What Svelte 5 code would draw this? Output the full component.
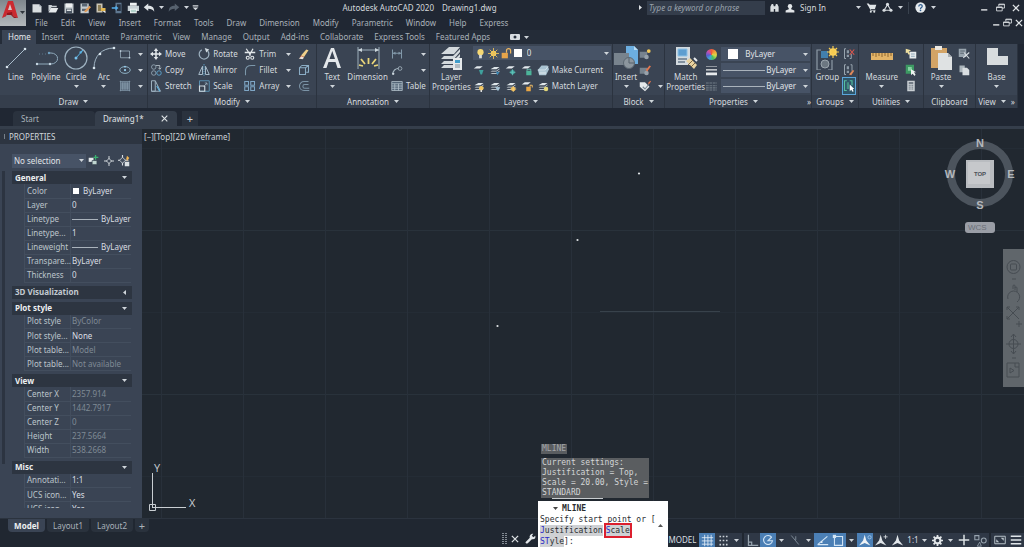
<script>
  const stack = '<path d="M2 7l5-3h7l-4 3zM2 10l2-1 6 0 4-3v1l-4 3zM2 13l2-1h6l4-3v1l-4 3z" fill="#dfe6ea"/>';
  const sheet = '<path d="M1 6l4-3h8l-4 3z" fill="#e4eaee"/>';

  const icons = {
    new: '<path d="M2 3h9l3 3v8H2z" fill="#d8dde0"/><path d="M11 3v3h3" fill="#9aa5ad"/>',
    open: '<path d="M2 13V4h4l1 1h6v2H6z" fill="#c9d0d4"/><path d="M5 8h10l-3 6H2z" fill="#e6eaec"/>',
    save: '<path d="M2 2h12v13H2z" fill="#c3cace"/><path d="M4 2h8v5H4z" fill="#eef1f2"/><path d="M4 9h8v6H4z" fill="#4b5663"/><path d="M5 10h6v2H5z" fill="#dde2e4"/>',
    saveas: '<path d="M2 2h11v13H2z" fill="#c3cace"/><path d="M4 2h7v4H4zM4 9h7v3H4z" fill="#596572"/><path d="M8 11l6-6 2 2-6 6-3 1z" fill="#e09a56"/>',
    web: '<path d="M2 2h8v12H2z" fill="#c9c4b4"/><path d="M4 4h4v8H4z" fill="#8a7b54"/><path d="M8 8h6v4H8z" fill="#e2b74f"/><path d="M10 12l4 3v-3z" fill="#eee"/>',
    mobile: '<path d="M6 1h8v14H6z" fill="#5f7891"/><path d="M8 3h5v9H8z" fill="#27313f"/><path d="M1 7h5V5l4 3-4 3V9H1z" fill="#55aeea"/>',
    print: '<path d="M4 1h9v4H4z" fill="#eef1f2"/><path d="M1 5h15v7H1z" fill="#c9d2d6"/><path d="M4 9h9v6H4z" fill="#f4f6f7"/><path d="M5 11h7M5 13h7" stroke="#7fb6a7"/>',
    undo: '<path d="M1 7l6-5v3c5 0 8 2 8 8-2-3-4-4-8-4v3z" fill="#dfe4e7"/>',
    redo: '<path d="M15 7L9 2v3c-5 0-8 2-8 8 2-3 4-4 8-4v3z" fill="#56616e"/>',
    qat: '<path d="M3 4h10v2H3zM3 8h10l-5 5z" fill="#d5dade"/>',
    find: '<path d="M2 14V7l2-4h2l1 3h2l1-3h2l2 4v7h-5v-4H7v4z" fill="#d8dde0"/>',
    user: '<circle cx="8" cy="5" r="3.5" fill="#e2e6e9"/><path d="M6 7h4v3l5 2v3H1v-3l5-2z" fill="#e2e6e9"/>',
    cart: '<path d="M1 2h3l1 2h10l-2 6H6z" fill="#dfe4e7"/><path d="M4 3l3 9h7" fill="none" stroke="#dfe4e7"/><circle cx="7" cy="14" r="1.5" fill="#dfe4e7"/><circle cx="12" cy="14" r="1.5" fill="#dfe4e7"/>',
    hub: '<path d="M8 4L3 12h10z" fill="none" stroke="#d9dee2" stroke-width="1.6"/><circle cx="8" cy="3.5" r="2.3" fill="#d9dee2"/><circle cx="3" cy="12" r="2.3" fill="#d9dee2"/><circle cx="13" cy="12" r="2.3" fill="#d9dee2"/>',
    help: '<circle cx="8" cy="8" r="7.5" fill="#e5eaee"/><path d="M5.5 6.5C5.5 3 10.5 3 10.5 6c0 2-2.5 2-2.5 4" fill="none" stroke="#2d5b8d" stroke-width="1.8"/><circle cx="8" cy="12.2" r="1.2" fill="#2d5b8d"/>',
    min: '<path d="M2 11h11v2.5H2z" fill="#dfe3e6"/>',
    restore: '<path d="M5 6V2h10v7h-4M5 3h10" fill="none" stroke="#dfe3e6" stroke-width="1.5"/><path d="M1 7h10v7H1zM1 8h10" fill="none" stroke="#dfe3e6" stroke-width="1.5"/>',
    close: '<path d="M3 3l10 10M13 3L3 13" stroke="#dfe3e6" stroke-width="2"/>',
    line: '<path d="M3 21L21 3" stroke="#a9bccb"/><circle cx="3" cy="21" r="1.3" fill="#d8e4ec"/><circle cx="21" cy="3" r="1.3" fill="#d8e4ec"/>',
    polyline: '<path d="M3 7h14a6 5 0 0 1 0 11H2" fill="none" stroke="#8fa9bb"/><path d="M3 6h11v2H3z" fill="#3a4453"/><path d="M5 8h9" stroke="#5b7488" stroke-dasharray="1 2"/><circle cx="3" cy="18" r="1.2" fill="#c6d6e2"/><circle cx="15" cy="7" r="1.2" fill="#6f9fc2"/><circle cx="16" cy="18" r="1.2" fill="#c6d6e2"/>',
    circle: '<circle cx="12" cy="12" r="11" fill="none" stroke="#9fb3c2" stroke-width="1.2"/><path d="M12 12l7-8" stroke="#58b4e6"/><circle cx="12" cy="12" r="1.5" fill="#78c3ee"/><path d="M19 4l-4 2 2 2z" fill="#58b4e6"/>',
    arc: '<path d="M2 22C2 10 10 2 22 2" fill="none" stroke="#9fb3c2"/><circle cx="2" cy="22" r="1.3" fill="#d8e4ec"/><circle cx="22" cy="2" r="1.3" fill="#d8e4ec"/><circle cx="8" cy="8" r="1.3" fill="#d8e4ec"/>',
    rect: '<path d="M2 4h12v9H2z" fill="none" stroke="#9fb3c2"/><path d="M1 3h2v2H1zM13 12h2v2h-2z" fill="#c6d6e2"/>',
    ellipse: '<ellipse cx="8" cy="8" rx="7" ry="4.5" fill="none" stroke="#8fb2c5" stroke-width="1.3"/><circle cx="8" cy="8" r="1.5" fill="#9ad0ef"/><circle cx="8" cy="3.5" r="1.2" fill="#9ad0ef"/>',
    hatch: '<path d="M2 3h12v10H2z" fill="#66798b"/><path d="M1 2h14M1 14h14M2 1v14M14 1v14" stroke="#8398a9"/><path d="M5 3v10M8 3v10M11 3v10" stroke="#91a5b5"/>',
    move: '<path d="M8 0l3 4H9v3h3V5l4 3-4 3V9H9v3h2l-3 4-3-4h2V9H4v2L0 8l4-3v2h3V4H5z" fill="#e3e8ec"/>',
    copy: '<circle cx="5" cy="4" r="3" fill="none" stroke="#9fb3c2"/><circle cx="5" cy="12" r="3" fill="none" stroke="#9fb3c2"/><circle cx="12" cy="12" r="3" fill="none" stroke="#63b6e4"/><path d="M8 2h5v5M11 5l2 2 2-2" fill="none" stroke="#c8d3da"/>',
    stretch: '<path d="M2 1h5v14H2zM7 1l7 14H2" fill="none" stroke="#9fb3c2" stroke-width="1.3"/><path d="M9 8l4 7" stroke="#63b6e4" stroke-width="1.5"/>',
    rotate: '<path d="M5 2.5A6.5 6.5 0 1 0 13 4" fill="none" stroke="#9fb3c2" stroke-width="1.6"/><path d="M9 0l6 2-4 4z" fill="#cfd9df"/>',
    mirror: '<path d="M6 3v11H1zM10 3v11h5z" fill="none" stroke="#a9bccb" stroke-width="1.3"/><path d="M8 0v16" stroke="#63b6e4" stroke-dasharray="2 1"/>',
    scale: '<path d="M2 1h13v14H2z" fill="none" stroke="#63a7cf"/><path d="M2 8h7v7H2z" fill="none" stroke="#cfd9df" stroke-width="1.5"/><path d="M7 9l5-5M9 4h3v3" fill="none" stroke="#9fb3c2"/>',
    trim: '<path d="M3 1l6 9M12 1L7 10M1 6h14" stroke="#e1e6e9" stroke-width="1.7"/><circle cx="5" cy="13" r="2" fill="none" stroke="#e1e6e9" stroke-width="1.5"/><circle cx="11" cy="13" r="2" fill="none" stroke="#e1e6e9" stroke-width="1.5"/>',
    fillet: '<path d="M2 15V9c0-5 3-7 8-7h5" fill="none" stroke="#7c97aa" stroke-width="1.4"/>',
    array: '<path d="M1 2h5v5H1zM9 2h5v5H9zM1 9h5v5H1zM9 9h5v5H9z" fill="none" stroke="#7fa6c5" stroke-width="1.4"/>',
    erase: '<path d="M4 10l7-8 3 1-6 9z" fill="#f0d08a"/><path d="M4 10l4 2-2 2-4 0z" fill="#e26d3b"/><path d="M1 14l4-3 3 2-2 2z" fill="#e9e4dc"/>',
    explode: '<path d="M2 5h8v9H2zM5 2h9v9h-3M2 5l3-3M10 5l4-3" fill="none" stroke="#8badc5" stroke-width="1.4"/>',
    offset: '<path d="M14 2H8a6 6 0 0 0 0 12h7M14 6H9a2.5 2.5 0 0 0 0 5h6" fill="none" stroke="#7b93a6" stroke-width="1.4"/>',
    text: '<path d="M3 22L11 2h3l7 20h-3.5l-2-6H8.5l-2 6zM9.5 13h5.5L12.3 5z" fill="#e3e7ea"/>',
    dimension: '<path d="M2 1v22M23 1v22M2 4h21" stroke="#9caebb" fill="none"/><path d="M2 4l4-2v4zM23 4l-4-2v4z" fill="#cdd7dd"/><path d="M12.5 18v-6M9 18l-4-5M16 18l4-5M7 20l-4-1M18 20l4-1" stroke="#e9d579" stroke-width="1.8"/>',
    dimlin: '<path d="M2 2v12M14 2v12M3 7h10" stroke="#8198a9" stroke-width="1.4"/><path d="M2 7l4-2v4zM14 7l-4-2v4z" fill="#8198a9"/>',
    leader: '<path d="M2 14c1-6 3-8 8-8" fill="none" stroke="#a9b9c4" stroke-width="1.4"/><circle cx="12" cy="6" r="2.5" fill="none" stroke="#a9b9c4"/><circle cx="3" cy="13" r="1.5" fill="#cdd7dd"/>',
    table: '<path d="M1 2h14v12H1z" fill="#536577" stroke="#b7c4ce"/><path d="M1 5h14M1 8h14M1 11h14M5 5v9M10 5v9" stroke="#b7c4ce"/>',
    layerprops: '<path d="M2 8l8-7h11l-6 7zM2 13l3-3h9l7-7v3l-6 7zM2 18l3-3h9l7-7v3l-6 7zM2 22l3-3h9l3-3v3l-3 3z" fill="#d3d9dd"/><path d="M14 12h9v12h-9z" fill="#e6eaec"/><path d="M16 14h5v3h-5z" fill="#3f9cc9"/><path d="M16 19h5M16 21h5" stroke="#7d8c98"/>',
    bulb: '<circle cx="8" cy="6" r="4.5" fill="#f6d873"/><path d="M6 10h4v5H6z" fill="#d7dbd9"/>',
    sun: '<circle cx="8" cy="8" r="4" fill="#f5cf60"/><path d="M8 0v16M0 8h16M2.5 2.5l11 11M13.5 2.5l-11 11" stroke="#e8bf5a" stroke-width="1.3"/>',
    lock: '<path d="M1 7h9v8H1z" fill="#e6a44b"/><path d="M8 7V4a3 3 0 0 1 6 0v4" fill="none" stroke="#f0b860" stroke-width="1.8"/>',
    lay1: sheet + '<path d="M8 8h6l-2 6h-2z" fill="#3fa19d"/>',
    lay2: stack + '<path d="M9 10l5 1-3 4z" fill="#3c89b5"/>',
    lay3: sheet + '<circle cx="10" cy="11" r="3" fill="#3fa19d"/><path d="M10 7v8M6 11h8" stroke="#67c5b9"/>',
    lay4: sheet + '<path d="M7 9h7v6H7z" fill="#4cb49a"/><path d="M8 9V7h5v2" fill="none" stroke="#7ed3c1"/>',
    lay5: '<path d="M1 8l5-6h8l2 5-4 8H3z" fill="#a9c2d0"/><path d="M1 8h10l4-5M3 11h9M3 13h9" fill="none" stroke="#e2ebf0"/>',
    lay6: stack + '<circle cx="11" cy="11" r="3" fill="#f2c65f"/><path d="M10 13h2v3h-2z" fill="#ddd"/>',
    lay7: stack + '<path d="M8 9l7 1-3 5z" fill="#a8c7da"/>',
    lay8: stack + '<circle cx="11" cy="12" r="3" fill="#eab452"/><path d="M11 8v8M7 12h8" stroke="#f4d27c"/>',
    lay9: sheet + '<path d="M7 9h6v6H7z" fill="#e8a645"/><path d="M12 9V7h3v3" fill="none" stroke="#efbb66" stroke-width="1.3"/>',
    lay10: stack + '<circle cx="12" cy="12" r="3" fill="#e2d67a"/>',
    insert: '<path d="M12 0h8l4 4v14H12z" fill="#6caee0"/><path d="M20 0v4h4z" fill="#b9dcf4"/><path d="M0 7h15v12H0z" fill="#78838d"/><circle cx="15" cy="17" r="5.5" fill="#8c969e" stroke="#5c6872"/><path d="M15 12v5h5" fill="none" stroke="#56626d"/>',
    blk1: '<path d="M1 5h10v8H1z" fill="#77838e"/><circle cx="10" cy="12" r="3" fill="#98a2ab"/><circle cx="13" cy="4" r="2.5" fill="#f2c85a"/>',
    blk2: '<path d="M1 5h10v8H1z" fill="#77838e"/><circle cx="10" cy="12" r="3" fill="#98a2ab"/><path d="M9 8l5-6 2 1-5 7z" fill="#e2774f"/>',
    blk3: '<path d="M1 3h7l6 6-6 6-7-6z" fill="#e4e8ea"/><path d="M5 9l3 3 5-6" fill="none" stroke="#788591" stroke-width="1.5"/><path d="M12 4l3-3 1 1-3 4z" fill="#e2774f"/>',
    match: '<path d="M2 1h14v18H2z" fill="#d3dadf"/><path d="M4 3h9v7H4z" fill="#5e9ed0" stroke="#8ec2e6"/><path d="M4 13h9M4 16h7" stroke="#68798a" stroke-width="1.5"/><path d="M12 15l4-3 7 7-3 4z" fill="#e9d3a0"/><path d="M14 19l5-5M17 21l4-4" stroke="#7a6441"/><path d="M20 12l3 3" stroke="#e8ecef" stroke-width="2"/>',
    lineweight: '<path d="M0 2h16v1H0zM0 6h16v2H0zM0 11h16v4H0z" fill="#e7eaec"/>',
    linetype: '<path d="M0 3h16M0 7h16M0 10h16M0 13h16" stroke="#717c87" stroke-width="1.5" stroke-dasharray="4 1"/>',
    group: '<path d="M6 4H2v20h4M17 24V14M17 24h-4" fill="none" stroke="#8d9aa6" stroke-width="1.2"/><path d="M6 5h7v7H6z" fill="#427fae"/><circle cx="10" cy="18" r="4" fill="#6c7781" stroke="#9aa4ac"/><circle cx="18" cy="6" r="3.8" fill="#ffd866"/><path d="M18 0v12M12 6h12M14 2l8 8M22 2l-8 8" stroke="#f7cb50" stroke-width="1.2"/>',
    grp1: '<path d="M4 1H2v13h2M9 14h2V8" fill="none" stroke="#9ba7b1" stroke-width="1.3"/><path d="M5 3h3v4H5zM5 9h3v3H5z" fill="#8b98a4"/><path d="M9 2l6 7M15 2L9 9" stroke="#d9564e" stroke-width="1.5"/>',
    grp2: '<path d="M4 1H2v13h2M10 1h2v8" fill="none" stroke="#9ba7b1" stroke-width="1.3"/><path d="M5 3h3v4H5zM5 9h3v3H5z" fill="#8b98a4"/><path d="M8 14l5-6 2 1-4 6z" fill="#e0885a"/>',
    grp3: '<path d="M5 1H2v13h3M9 1h3v6" fill="none" stroke="#56bfa0" stroke-width="1.5"/><path d="M5 3h3v9H5z" fill="#438f83"/><path d="M9 6v9l2-2 2 3 1-1-1-3h2z" fill="#fff"/>',
    measure: '<path d="M1 7h22v7H1z" fill="#e3b468"/><path d="M3 7v3M6 7v4M9 7v3M12 7v4M15 7v3M18 7v4M21 7v3" stroke="#8d6730"/>',
    util1: '<path d="M6 5h9v9H6z" fill="#e8ecee"/><path d="M1 1l7 2-3 2 2 3-2 1-2-3-2 1z" fill="#f0e1a0"/><path d="M8 8h5M8 11h5" stroke="#7394a8"/>',
    util2: '<path d="M1 1h11v12H1z" fill="#3d9a63"/><path d="M4 4h5v5H4z" fill="#86d2a1"/><path d="M8 7v8l2-2 3 3 1-2-2-3h3z" fill="#eef3f0"/>',
    calc: '<path d="M3 1h10v14H3z" fill="#c9cfd3"/><path d="M5 3h6v2H5z" fill="#56626e"/><path d="M5 7h6M5 9.5h6M5 12h6" stroke="#66727d" stroke-width="1.3" stroke-dasharray="1.5 .7"/>',
    paste: '<path d="M2 2h16v20H2z" fill="#d3a466"/><path d="M6 0h7v4H6z" fill="#ece9e2"/><path d="M9 7h10l4 4v13H9z" fill="#dfe2e3"/><path d="M19 7v4h4z" fill="#a9b0b5"/>',
    cut: '<path d="M1 1h10v11H1z" fill="#98a4ae"/><path d="M3 4h6M3 7h6" stroke="#47535f"/><path d="M8 6l7 8M15 6l-8 7" stroke="#d6dce0" stroke-width="1.5"/>',
    clip: '<path d="M2 2h7v9H2z" fill="#aab4bb"/><path d="M6 5h6l3 3v7H6z" fill="#d9dee1"/>',
    base: '<path d="M2 2h11v8h10v9H2z" fill="#d8dcde"/>',
    selQuick: '<path d="M1 4h7v6H1z" fill="#e3e8eb"/><path d="M6 8h7v6H6z" fill="#c0d5d0" stroke="#34424d"/><path d="M11 0v7M8 3.5h7" stroke="#39b370" stroke-width="1.8"/>',
    selPick: '<path d="M8 0v5M8 11v5M0 8h5M11 8h5" stroke="#dbe0e4" stroke-width="1.5"/><path d="M8 4l4 4-4 4-4-4z" fill="none" stroke="#dbe0e4" stroke-width="1.3"/>',
    selFilter: '<path d="M6 0v14M0 7h14" stroke="#dbe0e4" stroke-width="1.5"/><path d="M6 3l4 4-4 4-4-4z" fill="#434e5e" stroke="#dbe0e4"/><path d="M9 9h6v6H9z" fill="#dbe0e4"/><path d="M12 1l3 3-3 4-1-3z" fill="#f2b552"/>',
    wrench: '<path d="M1 13l6-6c-1-3 1-6 5-6l-2 3 2 2 3-2c1 4-2 6-5 5l-6 6c-2 1-4-1-3-2z" fill="#e3e7ea"/>',
    gridOn: '<path d="M1 4.5h14M1 8.5h14M1 12.5h14M4.5 1v14M8.5 1v14M12.5 1v14" stroke="#e6f0f9"/>',
    snap: '<path d="M3 3h10M3 8h10M3 13h10" stroke="#cbd2d8" stroke-width="2" stroke-dasharray="2 2"/>',
    ortho: '<path d="M3 1v13h12M3 10h4v4" fill="none" stroke="#98a4af" stroke-width="1.5"/>',
    polar: '<path d="M13 4.5A6 6 0 1 0 14 9H8l5-5" fill="none" stroke="#cfe3f5" stroke-width="1.5"/>',
    iso: '<path d="M3 2l10 12M9 3v5" stroke="#7d8a96" stroke-width="1.3"/>',
    track: '<path d="M2 13h13M2 13L14 3" stroke="#d3e5f5" stroke-width="1.4"/><path d="M6 9h2v2H6z" fill="#e6f0f9"/>',
    osnap: '<path d="M3 3h10v11H3z" fill="none" stroke="#d3e5f5" stroke-width="1.3"/><path d="M1 1h4v4H1z" fill="#d3e5f5"/>',
    anno: '<path d="M8 1l2 7 5 6-5-2-2-1-2 1-5 2 5-6z" fill="#e3e8ec"/>',
    annoA: '<path d="M7 1l2 7 5 6-5-2-2-1-2 1-5 2 5-6z" fill="#eef2f5"/><circle cx="13" cy="4" r="2" fill="none" stroke="#a8cdf0"/>',
    annoB: '<path d="M7 1l2 7 5 6-5-2-2-1-2 1-5 2 5-6z" fill="#e0e5e9"/><path d="M13 1v5M10.5 3.5h5" stroke="#e0e5e9"/>',
    gear: '<circle cx="8" cy="8" r="4.2" fill="none" stroke="#e3e7ea" stroke-width="3"/><path d="M8 0v3M8 13v3M0 8h3M13 8h3M2.3 2.3l2.2 2.2M11.5 11.5l2.2 2.2M13.7 2.3l-2.2 2.2M2.3 13.7l2.2-2.2" stroke="#e3e7ea" stroke-width="2.5"/>',
    plus: '<path d="M8 1v14M1 8h14" stroke="#dde2e5" stroke-width="2"/>',
    isolate: '<path d="M1 2h5v5H1z" fill="none" stroke="#98a4af" stroke-width="1.3"/><circle cx="12" cy="8" r="3" fill="none" stroke="#98a4af" stroke-width="1.3"/><path d="M7 10l-3 5h5z" fill="none" stroke="#98a4af"/>',
    full: '<path d="M1 3h14v10H1z" fill="none" stroke="#bcc5cc" stroke-width="1.3"/><path d="M9 5h4v4zM3 11h4L3 7z" fill="#bcc5cc"/>',
    menu: '<path d="M1 3h14M1 8h14M1 13h14" stroke="#e0e5e9" stroke-width="2.2"/>'
  };

  const quick = ['new', 'open', 'save', 'saveas', 'web', 'mobile', 'print'];
  const menus = ['File', 'Edit', 'View', 'Insert', 'Format', 'Tools', 'Draw', 'Dimension', 'Modify', 'Parametric', 'Window', 'Help', 'Express'];
  const tabs = ['Home', 'Insert', 'Annotate', 'Parametric', 'View', 'Manage', 'Output', 'Add-ins', 'Collaborate', 'Express Tools', 'Featured Apps'];

  const sections = [
    {
      title: 'General', open: true, rows: [
        { k: 'Color', v: 'ByLayer', mark: 'swatch' },
        { k: 'Layer', v: '0' },
        { k: 'Linetype', v: 'ByLayer', mark: 'rule' },
        { k: 'Linetype...', v: '1' },
        { k: 'Lineweight', v: 'ByLayer', mark: 'rule' },
        { k: 'Transpare...', v: 'ByLayer' },
        { k: 'Thickness', v: '0' }
      ]
    },
    { title: '3D Visualization', open: false, rows: [] },
    {
      title: 'Plot style', open: true, rows: [
        { k: 'Plot style', v: 'ByColor', dim: true },
        { k: 'Plot style...', v: 'None' },
        { k: 'Plot table...', v: 'Model', dim: true },
        { k: 'Plot table...', v: 'Not available', dim: true }
      ]
    },
    {
      title: 'View', open: true, rows: [
        { k: 'Center X', v: '2357.914', dim: true },
        { k: 'Center Y', v: '1442.7917', dim: true },
        { k: 'Center Z', v: '0', dim: true },
        { k: 'Height', v: '237.5664', dim: true },
        { k: 'Width', v: '538.2668', dim: true }
      ]
    },
    {
      title: 'Misc', open: true, rows: [
        { k: 'Annotati...', v: '1:1' },
        { k: 'UCS icon...', v: 'Yes' },
        { k: 'UCS icon...', v: 'Yes' }
      ]
    }
  ];
</script>

{#snippet ic(name, size = 12, box = 16)}
  <svg class="ic" width={size} height={size} viewBox="0 0 {box} {box}" aria-hidden="true">{@html icons[name]}</svg>
{/snippet}

{#snippet caret()}
  <svg class="caret" width="5" height="3" viewBox="0 0 5 3" aria-hidden="true"><path d="M0 0h5L2.5 3z" fill="currentColor" /></svg>
{/snippet}

{#snippet big(name, label, arrow = false)}
  <button class="big">
    {@render ic(name, 24, 24)}
    <span>{label}</span>
    {#if arrow}{@render caret()}{/if}
  </button>
{/snippet}

{#snippet small(name, label, arrow = false)}
  <button class="small" aria-label={label || name}>
    {@render ic(name)}
    {#if label}<span>{label}</span>{/if}
    {#if arrow}<span class="push">{@render caret()}</span>{/if}
  </button>
{/snippet}

<div class="app">
  <header>
    <button class="logo" aria-label="Application menu">
      <svg width="26" height="26" viewBox="0 0 26 26" aria-hidden="true">
        <defs>
          <linearGradient id="plate" x1="0" y1="0" x2="0" y2="1">
            <stop offset="0" stop-color="#7f878d" />
            <stop offset="1" stop-color="#b3b8bb" />
          </linearGradient>
        </defs>
        <path d="M0 0h26v26H0z" fill="url(#plate)" />
        <path d="M2 18L8 1h5l5 17-5-2-1-3H7l-1 3z" fill="#cb2a30" />
        <path d="M8 10l2-6 2 6z" fill="#d9c5c6" />
        <path d="M2 18l4-2 1-3 5-1 1 4 5 2-4 0-3-3-4 0z" fill="#93161d" />
        <path d="M20 11h5l-2.500 3z" fill="#30363d" />
      </svg>
    </button>
    <div class="heads">
      <div class="titlebar">
        <div class="quick">
          {#each quick as q}<button aria-label={q}>{@render ic(q, 12)}</button>{/each}
          <button aria-label="Undo">{@render ic('undo', 12)}</button>
          <button class="slim" aria-label="Undo list">{@render caret()}</button>
          <button aria-label="Redo">{@render ic('redo', 12)}</button>
          <button class="slim" aria-label="Redo list">{@render caret()}</button>
          <button class="slim" aria-label="Customize">{@render ic('qat', 9)}</button>
        </div>
        <div class="doc"><span>Autodesk AutoCAD 2020</span><span>Drawing1.dwg</span></div>
        <div class="search">
          <svg width="3" height="5" viewBox="0 0 3 5" aria-hidden="true"><path d="M0 0v5l3-2.500z" fill="#e0e4e7" /></svg>
          <input type="text" aria-label="Search" placeholder="Type a keyword or phrase" />
        </div>
        <div class="account">
          <button aria-label="Find">{@render ic('find', 11)}</button>
          <button class="sign">{@render ic('user', 10)}<span>Sign In</span></button>
          <button class="slim" aria-label="Account list">{@render caret()}</button>
          <button aria-label="Store">{@render ic('cart', 11)}</button>
          <button aria-label="Apps">{@render ic('hub', 11)}</button>
          <button class="slim" aria-label="Apps list">{@render caret()}</button>
          <i class="bar"></i>
          <button aria-label="Help">{@render ic('help', 11)}</button>
          <button class="slim" aria-label="Help list">{@render caret()}</button>
        </div>
        <div class="win">
          <button aria-label="Minimize">{@render ic('min', 9)}</button>
          <button aria-label="Restore">{@render ic('restore', 9)}</button>
          <button aria-label="Close">{@render ic('close', 10)}</button>
        </div>
      </div>
      <nav class="menus">
        {#each menus as m}<button>{m}</button>{/each}
        <div class="docwin">
          <button aria-label="Minimize drawing">{@render ic('min', 9)}</button>
          <button aria-label="Restore drawing">{@render ic('restore', 9)}</button>
          <button aria-label="Close drawing">{@render ic('close', 10)}</button>
        </div>
      </nav>
    </div>
  </header>

  <nav class="tabs">
    {#each tabs as t, i}<button class:on={i === 0}>{t}</button>{/each}
    <button class="express" aria-label="Ribbon display">
      <svg width="10" height="6" viewBox="0 0 10 6" aria-hidden="true"><rect width="10" height="6" rx="1" fill="#d9dee2" /><circle cx="5" cy="3" r="1.500" fill="#2a3340" /></svg>
      {@render caret()}
    </button>
  </nav>

  <div class="ribbon">
    <section>
      <div class="tools draw">
        {@render big('line', 'Line')}
        {@render big('polyline', 'Polyline')}
        {@render big('circle', 'Circle', true)}
        {@render big('arc', 'Arc', true)}
        <div class="col">
          {@render small('rect', '', true)}
          {@render small('ellipse', '', true)}
          {@render small('hatch', '', true)}
        </div>
      </div>
      <h2>Draw {@render caret()}</h2>
    </section>
    <section>
      <div class="tools modify">
        <div class="col">{@render small('move', 'Move')}{@render small('copy', 'Copy')}{@render small('stretch', 'Stretch')}</div>
        <div class="col">{@render small('rotate', 'Rotate')}{@render small('mirror', 'Mirror')}{@render small('scale', 'Scale')}</div>
        <div class="col">{@render small('trim', 'Trim', true)}{@render small('fillet', 'Fillet', true)}{@render small('array', 'Array', true)}</div>
        <div class="col">{@render small('erase', '')}{@render small('explode', '')}{@render small('offset', '')}</div>
      </div>
      <h2>Modify {@render caret()}</h2>
    </section>
    <section>
      <div class="tools annot">
        {@render big('text', 'Text', true)}
        {@render big('dimension', 'Dimension')}
        <div class="col">{@render small('dimlin', '', true)}{@render small('leader', '', true)}{@render small('table', 'Table')}</div>
      </div>
      <h2>Annotation {@render caret()}</h2>
    </section>
    <section>
      <div class="tools layers">
        {@render big('layerprops', 'Layer Properties')}
        <div class="layergrid">
          <label class="combo layer">
            <select aria-label="Layer"><option>0</option></select>
            <span class="pre">{@render ic('bulb', 11)}{@render ic('sun', 11)}{@render ic('lock', 11)}<i class="swatch"></i></span>
            <span class="end">{@render caret()}</span>
          </label>
          {#each ['lay1', 'lay2', 'lay3', 'lay4'] as l}{@render small(l, '')}{/each}
          {@render small('lay5', 'Make Current')}
          {#each ['lay6', 'lay7', 'lay8', 'lay9'] as l}{@render small(l, '')}{/each}
          {@render small('lay10', 'Match Layer')}
        </div>
      </div>
      <h2>Layers {@render caret()}</h2>
    </section>
    <section>
      <div class="tools block">
        {@render big('insert', 'Insert', true)}
        <div class="col">{@render small('blk1', '')}{@render small('blk2', '')}{@render small('blk3', '', true)}</div>
      </div>
      <h2>Block {@render caret()}</h2>
    </section>
    <section>
      <div class="tools props">
        {@render big('match', 'Match Properties')}
        <div class="propgrid">
          <i class="wheel"></i>
          <label class="combo"><select aria-label="Object color"><option>ByLayer</option></select><span class="pre"><i class="swatch big-sw"></i></span><span class="end">{@render caret()}</span></label>
          {@render ic('lineweight', 11)}
          <label class="combo ruled"><select aria-label="Lineweight"><option>ByLayer</option></select><span class="pre"><i class="rule"></i></span><span class="end">{@render caret()}</span></label>
          {@render ic('linetype', 11)}
          <label class="combo ruled"><select aria-label="Linetype"><option>ByLayer</option></select><span class="pre"><i class="rule"></i></span><span class="end">{@render caret()}</span></label>
        </div>
      </div>
      <h2 class="more"><span>Properties {@render caret()}</span><b>»</b></h2>
    </section>
    <section>
      <div class="tools groups">
        {@render big('group', 'Group')}
        <div class="col">{@render small('grp1', '')}{@render small('grp2', '')}<div class="picked">{@render small('grp3', '')}</div></div>
      </div>
      <h2>Groups {@render caret()}</h2>
    </section>
    <section>
      <div class="tools utils">
        {@render big('measure', 'Measure', true)}
        <div class="col">{@render small('util1', '')}{@render small('util2', '')}{@render small('calc', '')}</div>
      </div>
      <h2>Utilities {@render caret()}</h2>
    </section>
    <section>
      <div class="tools clipb">
        {@render big('paste', 'Paste', true)}
        <div class="col">{@render small('cut', '')}{@render small('clip', '')}</div>
      </div>
      <h2>Clipboard</h2>
    </section>
    <section>
      <div class="tools viewp">
        {@render big('base', 'Base', true)}
      </div>
      <h2>View {@render caret()} <b>»</b></h2>
    </section>
  </div>

  <nav class="files">
    <button class="file">Start</button>
    <button class="file on"><span>Drawing1*</span>{@render ic('close', 9)}</button>
    <button class="add" aria-label="New drawing">+</button>
  </nav>

  <main>
    <aside>
      <h3><i></i>PROPERTIES</h3>
      <div class="palette">
        <div class="track"></div>
        <div class="inner">
          <div class="pick">
            <label class="combo"><select aria-label="Selection"><option>No selection</option></select><span class="end">{@render caret()}</span></label>
            <button aria-label="Toggle pickadd">{@render ic('selQuick', 11)}</button>
            <button aria-label="Select objects">{@render ic('selPick', 10)}</button>
            <button aria-label="Quick select">{@render ic('selFilter', 12)}</button>
          </div>
          {#each sections as s}
            <div class="sect">
              <button class="shead" class:shut={!s.open}>
                <span>{s.title}</span>
                {@render caret()}
              </button>
              {#if s.rows.length}
                <table>
                  <tbody>
                    {#each s.rows as r}
                      <tr>
                        <th scope="row">{r.k}</th>
                        <td class:dim={r.dim}>
                          <div>{#if r.mark}<i class={r.mark}></i>{/if}{r.v}</div>
                        </td>
                      </tr>
                    {/each}
                  </tbody>
                </table>
              {/if}
            </div>
          {/each}
        </div>
      </div>
    </aside>

    <div class="canvas">
      <div class="vp">[−][Top][2D Wireframe]</div>
      <svg class="geo" width="600" height="389" viewBox="142 129 600 389" aria-hidden="true">
        <path d="M600 311.500h120" stroke="#38424b" />
        <circle cx="639" cy="173.500" r="1.100" fill="#dfe3e6" />
        <circle cx="577.500" cy="240" r="1.100" fill="#dfe3e6" />
        <circle cx="497.500" cy="326" r="1.100" fill="#dfe3e6" />
      </svg>
      <svg class="ucs" width="60" height="56" viewBox="0 0 60 56">
        <path d="M10.500 47V13M10 47.500h34" stroke="#c9ced2" fill="none" />
        <path d="M7.500 44.500h6v6h-6z" stroke="#c9ced2" fill="none" />
        <text x="12" y="12">Y</text>
        <text x="47" y="47">X</text>
      </svg>
      <div class="cube">
        <svg width="72" height="76" viewBox="0 0 72 76">
          <circle cx="36" cy="38" r="29" fill="none" stroke="#4c545d" stroke-width="8" />
          <path d="M22 24h28v28H22z" fill="#b9bcc0" />
          <path d="M24 26h22v22H24z" fill="#c6c8cb" />
          <text class="dir" x="36" y="11">N</text>
          <text class="dir" x="36" y="73">S</text>
          <text class="dir" x="6" y="42">W</text>
          <text class="dir" x="67" y="42">E</text>
          <text class="top" x="36" y="40">TOP</text>
        </svg>
        <button class="wcs">WCS</button>
      </div>
      <div class="navbar">
        <svg width="17" height="126" viewBox="0 0 17 126" fill="none" stroke="#464c52" aria-hidden="true">
          <circle cx="8.500" cy="12" r="6.500" /><rect x="5.500" y="9" width="6" height="6" rx="1" />
          <path d="M7 24h4" />
          <path d="M3 44a6 6 0 1 1 9 3M8 34v-3a1 1 0 0 1 2 0v4M10 33a1 1 0 0 1 2 0v4" />
          <path d="M2 52l12 12M14 52L2 64M2 55v-3h3M11 52h3v3M2 61v3h3M14 66v6M11 69h6" />
          <path d="M8.500 79v20M1 89h15M6 82l2.500-3 2.500 3M6 96l2.500 3 2.500-3" /><circle cx="8.500" cy="89" r="4.500" />
          <path d="M7 103h4" />
          <path d="M2 108h12v14H2zM5 113v5l4-2.500zM10 108v4h4" />
        </svg>
      </div>
    </div>
  </main>

  <footer>
    <nav class="layouts">
      <button class="on">Model</button>
      <button>Layout1</button>
      <button>Layout2</button>
      <button class="plus" aria-label="New layout">+</button>
    </nav>
    <div class="status">
      <button class="model">MODEL</button>
      <button class="lit" aria-label="Grid">{@render ic('gridOn', 13)}</button>
      <button aria-label="Snap">{@render ic('snap', 13)}</button>
      <button class="arrow" aria-label="Snap settings">{@render caret()}</button>
      <i class="gap"></i>
      <button aria-label="Ortho">{@render ic('ortho', 13)}</button>
      <button class="lit" aria-label="Polar tracking">{@render ic('polar', 12)}</button>
      <button class="arrow" aria-label="Polar settings">{@render caret()}</button>
      <button aria-label="Isometric">{@render ic('iso', 12)}</button>
      <button class="arrow" aria-label="Isometric settings">{@render caret()}</button>
      <button class="lit" aria-label="Object snap tracking">{@render ic('track', 13)}</button>
      <button class="lit" aria-label="Object snap">{@render ic('osnap', 13)}</button>
      <button class="arrow" aria-label="Object snap settings">{@render caret()}</button>
      <button class="lit" aria-label="Annotation visibility">{@render ic('annoA', 13)}</button>
      <button aria-label="Auto scale">{@render ic('annoB', 13)}</button>
      <button aria-label="Annotation scale">{@render ic('anno', 13)}</button>
      <button class="ratio"><span>1:1</span>{@render caret()}</button>
      <button aria-label="Workspace">{@render ic('gear', 11)}</button>
      <button class="arrow" aria-label="Workspace list">{@render caret()}</button>
      <button aria-label="Annotation monitor">{@render ic('plus', 12)}</button>
      <button class="wide" aria-label="Isolate objects">{@render ic('isolate', 13)}</button>
      <i class="gap"></i>
      <button class="wide" aria-label="Clean screen">{@render ic('full', 12)}</button>
      <button aria-label="Customization">{@render ic('menu', 12)}</button>
    </div>
  </footer>

  <div class="command">
    <div class="grip">
      <svg width="5" height="12" viewBox="0 0 5 12" aria-hidden="true"><path d="M1 0v12M4 0v12" stroke="#a4adb5" stroke-width="1.500" stroke-dasharray="1 1" /></svg>
      <button aria-label="Close command line">{@render ic('close', 10)}</button>
      <button aria-label="Command settings">{@render ic('wrench', 11)}</button>
    </div>
    <div class="log">
      <div class="past tag">MLINE</div>
      <div class="past">Current settings:<br />Justification = Top,<br />Scale = 20.00, Style =<br />STANDARD</div>
      <div class="cross"></div>
      <div class="prompt">
        <div class="ptext">
          <div class="phead">{@render caret()} <b>MLINE</b></div>
          <div>Specify start point or [</div>
          <div class="opts"><button><em>J</em>ustification</button><button class="hot"><em>S</em>cale</button></div>
          <div class="opts"><button><em>ST</em>yle</button>]:</div>
        </div>
        <svg width="5" height="3" viewBox="0 0 5 3" aria-hidden="true"><path d="M0 3h5L2.500 0z" fill="#555" /></svg>
      </div>
    </div>
  </div>
</div>

<style>
  :global(body) {
    background: #202733;
  }

  .app {
    position: relative;
    display: flex;
    flex-direction: column;
    height: 100vh;
    overflow: hidden;
    background: #202733;
    color: #c9d0d6;
    font: 8px/12px "Noto Sans", "Open Sans", sans-serif;
  }

  button,
  input,
  select {
    margin: 0;
    padding: 0;
    border: 0;
    background: none;
    color: inherit;
    font: inherit;
  }

  button {
    display: inline-flex;
    align-items: center;
    justify-content: center;
    white-space: nowrap;
  }

  svg {
    display: block;
    flex: none;
  }

  h2,
  h3 {
    margin: 0;
    font: inherit;
  }

  .caret {
    color: #cfd5da;
  }

  /* title and menu */
  header {
    display: flex;
    flex: none;
    height: 30px;
  }

  .logo {
    align-self: flex-start;
  }

  .heads {
    flex: 1;
    min-width: 0;
  }

  .titlebar {
    display: flex;
    align-items: center;
    height: 15px;
    color: #d5dade;
  }

  .quick {
    display: flex;
    padding-left: 3px;
  }

  .quick button {
    width: 16px;
  }

  .quick .slim {
    width: 9px;
  }

  .doc {
    display: flex;
    flex: 1;
    justify-content: center;
    gap: 8px;
  }

  .search {
    display: flex;
    align-items: center;
    gap: 5px;
  }

  .search input {
    width: 118px;
    height: 14px;
    box-sizing: border-box;
    padding-left: 2px;
    background: #343d4b;
    font-style: italic;
  }

  .search input::placeholder {
    color: #99a2ab;
    opacity: 1;
  }

  .account {
    display: flex;
    align-items: center;
    padding-left: 1px;
  }

  .account button {
    width: 16px;
  }

  .account .slim {
    width: 10px;
  }

  .account .sign {
    width: 71px;
    gap: 5px;
    justify-content: flex-start;
    padding-left: 3px;
  }

  .bar {
    width: 1px;
    height: 12px;
    margin: 0 3px;
    background: #39424e;
  }

  .win {
    display: flex;
    margin-left: 38px;
  }

  .win button {
    width: 16px;
  }

  .menus {
    display: flex;
    gap: 13px;
    align-items: center;
    height: 15px;
    padding-left: 9px;
    color: #a9b1b9;
  }

  .docwin {
    display: flex;
    margin-left: auto;
  }

  .docwin button {
    width: 11px;
  }

  /* ribbon tabs */
  .tabs {
    display: flex;
    flex: none;
    height: 14px;
    padding-left: 2px;
    background: #242c38;
    color: #a9b1b9;
  }

  .tabs button {
    padding: 0 5px 0 6px;
  }

  .tabs .on {
    background: #3a4454;
    color: #e6e9ec;
  }

  .tabs .express {
    gap: 4px;
    margin-left: 9px;
  }

  /* ribbon */
  .ribbon {
    display: grid;
    grid-template-columns: 148fr 169fr 113fr 183fr 52fr 147fr 47fr 65fr 52fr 42fr;
    flex: none;
    height: 64px;
    margin-right: 6px;
    background: #3a4453;
    color: #d5dadf;
  }

  section {
    display: flex;
    flex-direction: column;
    min-width: 0;
    border-right: 1px solid #2b333f;
  }

  section h2 {
    display: flex;
    align-items: center;
    justify-content: center;
    gap: 5px;
    height: 13px;
    background: #353e4c;
  }

  .more span {
    display: flex;
    flex: 1;
    align-items: center;
    justify-content: center;
    gap: 5px;
  }

  h2 b {
    font-weight: 400;
  }

  .tools {
    display: flex;
    flex: 1;
    justify-content: space-evenly;
    padding-top: 2px;
  }

  .big {
    flex-direction: column;
    justify-content: flex-start;
    line-height: 10px;
    white-space: normal;
  }

  .big span {
    padding-top: 2px;
  }

  .big .ic + span + :global(.caret) {
    margin-top: 3px;
  }

  .col {
    display: flex;
    flex-direction: column;
  }

  .small {
    justify-content: flex-start;
    gap: 3px;
    height: 16px;
  }

  .push {
    display: flex;
    margin-left: auto;
    padding-left: 4px;
  }

  .modify {
    justify-content: space-between;
    padding-right: 6px;
    padding-left: 2px;
  }

  .layers .big,
  .props .big {
    width: 40px;
  }

  .layergrid {
    display: grid;
    grid-template-columns: 16px 16px 16px 16px 74px;
    grid-auto-rows: 16px;
  }

  .combo {
    display: grid;
    align-items: center;
    height: 14px;
    background: #475366;
  }

  .combo > * {
    grid-area: 1 / 1;
  }

  .combo select {
    width: 100%;
    height: 14px;
    padding-left: 2px;
    appearance: none;
    color: #e0e4e8;
  }

  .pre {
    display: flex;
    align-items: center;
    gap: 2px;
    padding-left: 2px;
    pointer-events: none;
  }

  .end {
    justify-self: end;
    padding-right: 2px;
    pointer-events: none;
  }

  .layer {
    grid-column: 1 / -1;
  }

  .layer select {
    padding-left: 54px;
  }

  .swatch {
    width: 8px;
    height: 8px;
    background: #fff;
  }

  .propgrid {
    display: grid;
    grid-template-columns: 11px 89px;
    grid-auto-rows: 16px;
    align-items: center;
    gap: 0 4px;
  }

  .propgrid select {
    padding-left: 24px;
  }

  .propgrid .ruled select {
    padding-left: 45px;
  }

  .propgrid .big-sw {
    width: 10px;
    height: 10px;
    margin-left: 5px;
  }

  .rule {
    width: 42px;
    height: 1px;
    background: #aab3bc;
  }

  .wheel {
    width: 11px;
    height: 11px;
    border-radius: 50%;
    background: conic-gradient(#f05a3c, #f2a33a, #d9d94a, #4fbf5b, #3fa7d9, #5a5fd0, #c04fb0, #f05a3c);
  }

  .picked {
    display: flex;
    outline: 1px solid #5aa5da;
    background: #2f5569;
  }

  /* file tabs */
  .files {
    display: flex;
    flex: none;
    height: 21px;
    box-sizing: border-box;
    padding: 3px 0 0 13px;
    border-bottom: 3px solid #353e4b;
    background: #202733;
  }

  .file {
    justify-content: space-between;
    width: 82px;
    padding: 0 8px;
    border-radius: 4px 4px 0 0;
    background: #2a323e;
    color: #aab2ba;
  }

  .file.on {
    background: #353e4b;
    color: #e1e5e8;
  }

  .add {
    width: 16px;
    margin-left: 5px;
    background: #2a323e;
    font-size: 11px;
  }

  /* work area */
  main {
    display: flex;
    flex: 1;
    min-height: 0;
  }

  aside {
    display: flex;
    flex-direction: column;
    flex: none;
    width: 142px;
    background: #3a4454;
  }

  aside h3 {
    display: flex;
    align-items: center;
    gap: 4px;
    height: 15px;
    padding-left: 4px;
    background: #2d3541;
    color: #d0d6db;
  }

  aside h3 i {
    width: 1px;
    height: 5px;
    background: #77818b;
  }

  .palette {
    display: flex;
    flex: 1;
    gap: 7px;
    min-height: 0;
    padding: 9px 10px 10px 2px;
  }

  .track {
    width: 3px;
    margin: 18px 0 44px;
    background: #2c3441;
  }

  .inner {
    flex: 1;
    min-width: 0;
    overflow: hidden;
  }

  .pick {
    display: grid;
    grid-template-columns: 74px 1fr 1fr 1fr;
    align-items: center;
    height: 15px;
  }

  .sect {
    margin-top: 3px;
  }

  .shead {
    justify-content: space-between;
    width: 100%;
    height: 13px;
    padding: 0 5px 0 3px;
    background: #2d3541;
    color: #eceff1;
    font-weight: 700;
  }

  .shut {
    color: #c3cad1;
  }

  .shut :global(.caret) {
    transform: rotate(90deg);
  }

  table {
    width: 107px;
    margin-left: 12px;
    border-collapse: collapse;
    table-layout: fixed;
  }

  tr {
    height: 14px;
  }

  th,
  td {
    height: 13px;
    padding: 0 0 0 2px;
    border: solid #434e5e;
    border-width: 0 0 1px 1px;
    font-weight: 400;
    text-align: left;
    white-space: nowrap;
  }

  th {
    width: 43px;
    color: #bcc4cb;
  }

  td {
    padding-left: 1px;
    color: #d9dee2;
  }

  td div {
    display: flex;
    align-items: center;
    gap: 3px;
  }

  td .rule {
    width: 26px;
  }

  td .swatch {
    width: 6px;
    height: 6px;
    margin: 0 1px;
  }

  .dim {
    color: #7f8a95;
  }

  .canvas {
    position: relative;
    flex: 1;
    min-width: 0;
    overflow: hidden;
    background:
      repeating-linear-gradient(90deg, transparent 0 19px, #28303a 19px 20px, transparent 20px 82px),
      repeating-linear-gradient(180deg, transparent 0 101px, #29323b 101px 102px, transparent 102px 164px),
      repeating-linear-gradient(180deg, transparent 0 19px, #242c35 19px 20px, transparent 20px 82px),
      #212830;
  }

  .vp {
    padding: 2px;
    color: #cdd3d8;
  }

  .geo {
    position: absolute;
    left: 0;
    top: 0;
  }

  .ucs {
    position: absolute;
    left: 0;
    bottom: 2px;
  }

  .ucs text {
    fill: #c9ced2;
    font: 11px "Open Sans", sans-serif;
  }

  .cube {
    position: absolute;
    top: 7px;
    right: 8px;
    display: flex;
    flex-direction: column;
    align-items: center;
    gap: 10px;
  }

  .cube text {
    text-anchor: middle;
  }

  .dir {
    fill: #b4b8bc;
    font: 700 11px "Liberation Sans", sans-serif;
  }

  .top {
    fill: #4c5158;
    font: 700 6px "Liberation Sans", sans-serif;
  }

  .wcs {
    width: 30px;
    height: 11px;
    justify-content: flex-start;
    padding-left: 3px;
    border-radius: 3px;
    background: #9a9ea6;
    color: #6a6f78;
    font-family: "Liberation Sans", sans-serif;
  }

  .navbar {
    position: absolute;
    right: 0;
    top: 120px;
    padding: 6px 2px;
    background: #60666b;
  }

  /* bottom */
  footer {
    display: flex;
    flex: none;
    justify-content: space-between;
    height: 28px;
    border-top: 1px solid #2b333e;
    background: #202731;
  }

  .layouts {
    display: flex;
    gap: 2px;
    height: 13px;
    padding-left: 8px;
    color: #a9b1b9;
  }

  .layouts button {
    width: 42px;
    border-radius: 0 0 4px 4px;
    background: #2a323d;
  }

  .layouts .on {
    width: 37px;
    background: #3a4454;
    color: #eceff1;
    font-weight: 700;
  }

  .layouts .plus {
    width: 14px;
    font-size: 11px;
  }

  .status {
    display: flex;
    align-self: flex-end;
    height: 14px;
    color: #d9dee2;
  }

  .status button {
    width: 16px;
    background: #2f3846;
  }

  .status .model {
    width: 31px;
    padding-right: 2px;
    background: none;
  }

  .status .lit {
    background: #4b7fb5;
  }

  .status .arrow {
    width: 11px;
  }

  .status .wide {
    width: 17px;
  }

  .status .ratio {
    width: 24px;
    gap: 3px;
  }

  .gap {
    width: 2px;
  }

  .command {
    position: absolute;
    bottom: 0;
    left: 502px;
    display: flex;
    align-items: flex-end;
  }

  .grip {
    display: flex;
    align-items: center;
    gap: 3px;
    width: 36px;
    height: 17px;
  }

  .grip button + button {
    margin-left: 2px;
  }

  .log {
    display: flex;
    flex-direction: column;
    align-items: flex-start;
    font: 8px/10px "DejaVu Sans Mono", monospace;
  }

  .past {
    box-sizing: border-box;
    margin-left: 3px;
    padding: 0 1px;
    background: #5a5d60;
    color: #d3d5d6;
    white-space: nowrap;
  }

  .tag {
    margin-bottom: 4px;
    color: #a3a6a8;
  }

  .cross {
    width: 51px;
    height: 2px;
    margin-left: 14px;
    border-top: 1px solid #c9cdd0;
  }

  .prompt {
    display: flex;
    align-items: center;
    justify-content: space-between;
    width: 130px;
    box-sizing: border-box;
    padding: 2px 5px 0 2px;
    background: #fff;
    color: #2a2d30;
    line-height: 11px;
  }

  .ptext {
    white-space: nowrap;
  }

  .phead {
    display: flex;
    align-items: center;
    gap: 4px;
    padding-left: 13px;
  }

  .phead :global(.caret) {
    color: #444;
  }

  .opts {
    display: flex;
  }

  .opts button {
    background: #cfd1d4;
  }

  .opts em {
    color: #2a2ac8;
    font-style: normal;
  }

  .opts .hot {
    margin-left: 3px;
    outline: 2px solid #dc1f2e;
  }
</style>
